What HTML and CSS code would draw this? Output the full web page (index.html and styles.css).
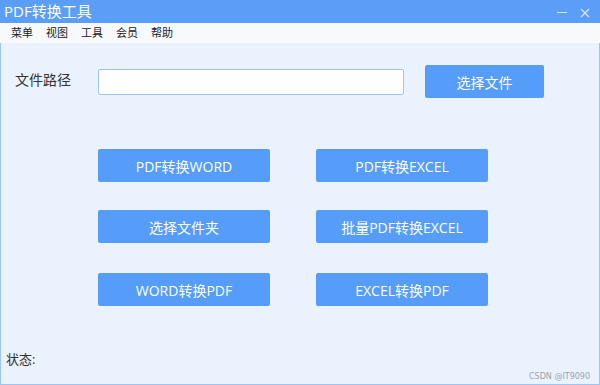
FILE: index.html
```html
<!DOCTYPE html>
<html lang="zh-CN">
<head>
  <meta charset="UTF-8" />
  <title>PDF转换工具</title>
  <link rel="stylesheet" href="styles.css">
</head>
<body>
  <div class="window">
    <!-- Title bar -->
    <div class="titlebar">
      <span class="title">PDF转换工具</span>
      <div class="controls">
        <span class="ctrl-min"></span>
        <svg class="ctrl-close" width="10" height="10" viewBox="0 0 10 10">
          <path d="M1 1 L9 9 M9 1 L1 9" stroke="#d6e7fd" stroke-width="1.2" fill="none"/>
        </svg>
      </div>
    </div>

    <!-- Menu -->
    <ul class="menubar">
      <li>菜单</li>
      <li>视图</li>
      <li>工具</li>
      <li>会员</li>
      <li>帮助</li>
    </ul>

    <div class="content">
      <div class="path-row">
        <span class="path-label">文件路径</span>
        <input class="path-input" type="text">
        <button class="btn btn-pick">选择文件</button>
      </div>

      <div class="actions">
        <button class="btn">PDF转换WORD</button>
        <button class="btn">PDF转换EXCEL</button>
        <button class="btn">选择文件夹</button>
        <button class="btn">批量PDF转换EXCEL</button>
        <button class="btn row3">WORD转换PDF</button>
        <button class="btn row3">EXCEL转换PDF</button>
      </div>

      <div class="status">状态:</div>
      <span class="watermark">CSDN @IT9090</span>
    </div>
  </div>
</body>
</html>
```

FILE: styles.css
```css
* {
  margin: 0;
  padding: 0;
  box-sizing: border-box;
}

body {
  font-family: "Open Sans", "Noto Sans CJK SC", sans-serif;
  width: 600px;
  height: 385px;
  overflow: hidden;
  background: #eaf2fe;
}

.window {
  display: flex;
  flex-direction: column;
  width: 600px;
  height: 385px;
}

/* Title bar */
.titlebar {
  display: flex;
  align-items: center;
  justify-content: space-between;
  height: 23px;
  background: #5a9ef7;
  padding: 0 10px 0 4px;
}
.title {
  color: #fff;
  font-size: 15px;
  line-height: 23px;
}
.controls {
  display: flex;
  align-items: center;
  gap: 13px;
  padding-top: 2px;
}
.ctrl-min {
  display: block;
  width: 10px;
  height: 1px;
  background: #d6e7fd;
}

/* Menu bar */
.menubar {
  display: flex;
  list-style: none;
  height: 20px;
  align-items: center;
  background: #f8f9fb;
  padding-left: 11px;
  gap: 13px;
}
.menubar li {
  font-size: 11px;
  color: #222;
  line-height: 20px;
}

/* Main area */
.content {
  position: relative;
  flex: 1;
  display: flex;
  flex-direction: column;
  background: #eaf2fe;
  border: 1px solid #9cc4f7;
  border-top: none;
}

.path-row {
  display: flex;
  align-items: center;
  height: 33px;
  margin-top: 22px;
  padding-left: 14px;
}
.path-label {
  font-size: 14px;
  line-height: 18px;
  color: #333;
  width: 83px;
  margin-top: -4px;
}
.path-input {
  width: 306px;
  height: 26px;
  border: 1px solid #9ec4f2;
  border-radius: 2px;
  background: #fff;
  outline: none;
}

.btn {
  border: none;
  border-radius: 2px;
  background: #559df8;
  color: #fff;
  font-family: "Open Sans", "Noto Sans CJK SC", sans-serif;
  font-size: 14px;
  height: 33px;
}
.btn-pick {
  width: 119px;
  margin-left: 21px;
}

.actions {
  display: grid;
  grid-template-columns: 172px 172px;
  column-gap: 46px;
  row-gap: 28px;
  margin-top: 51px;
  padding-left: 97px;
}
.btn.row3 {
  margin-top: 2px;
}

.status {
  margin-top: auto;
  margin-bottom: 16px;
  padding-left: 5px;
  font-size: 13px;
  color: #333;
}

.watermark {
  position: absolute;
  right: 9px;
  bottom: 3px;
  font-family: "DejaVu Sans", sans-serif;
  font-size: 8px;
  color: #9aa3b0;
}
```
